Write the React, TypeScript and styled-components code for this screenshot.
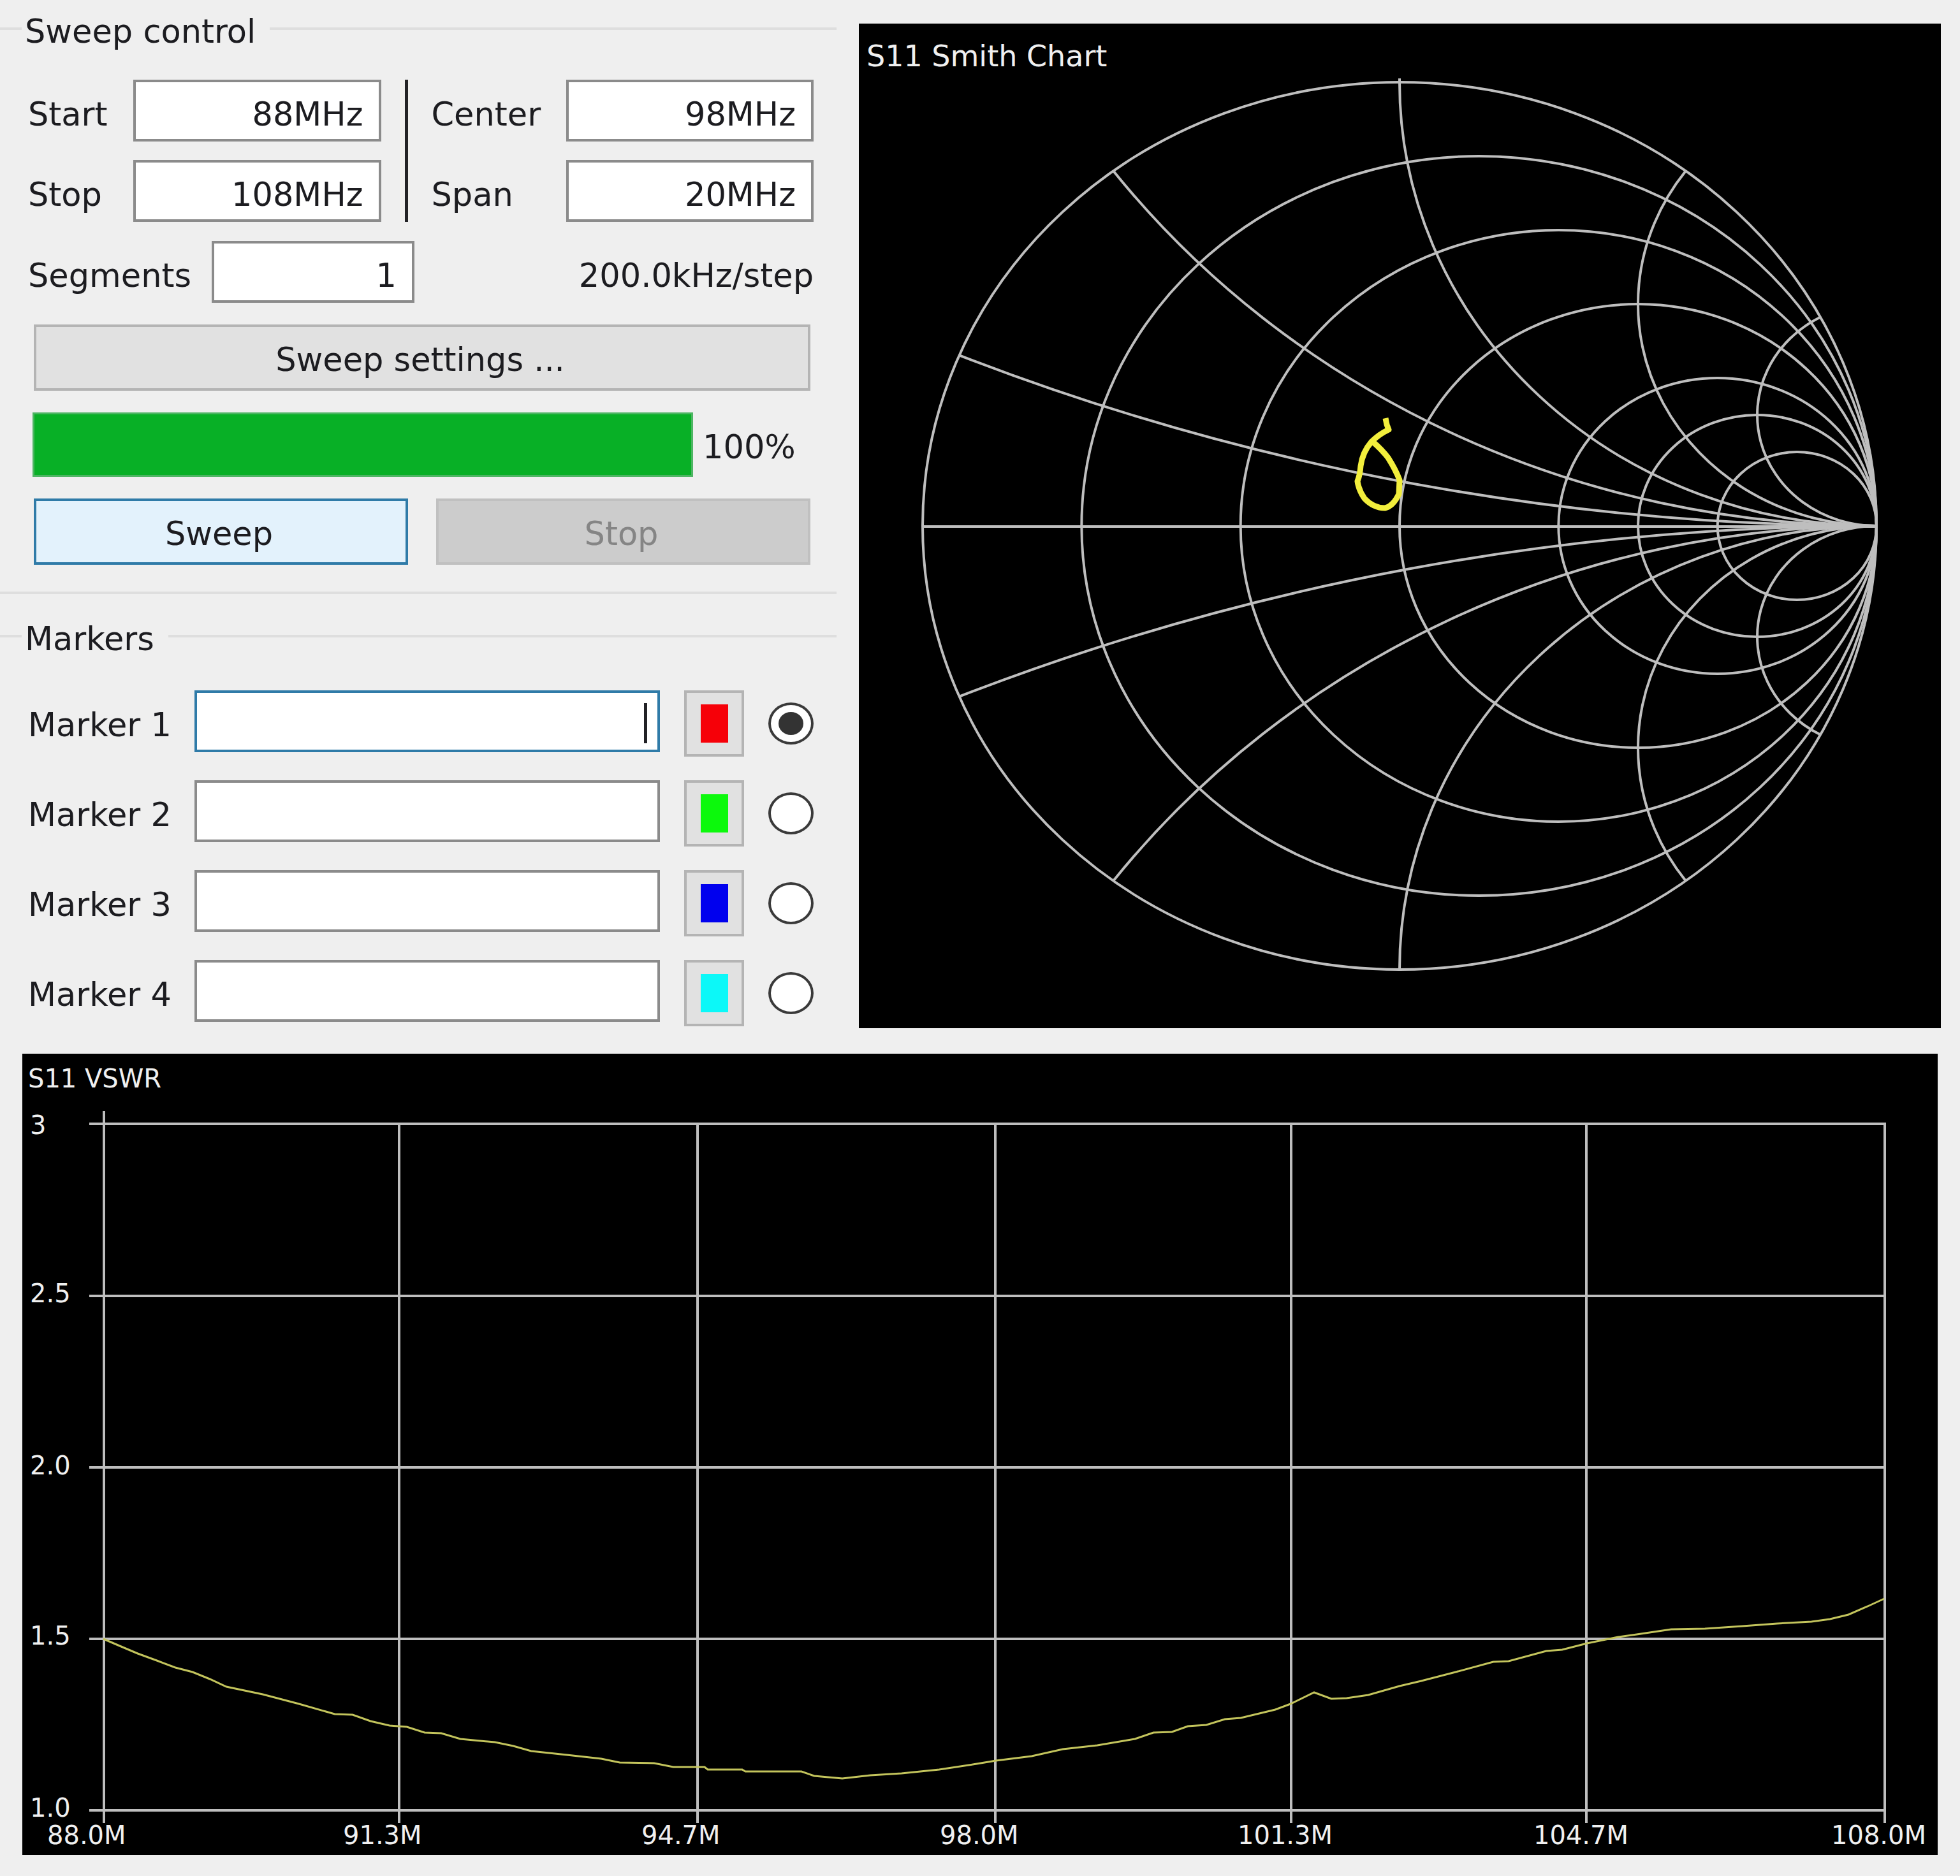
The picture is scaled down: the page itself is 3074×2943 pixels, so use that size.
import React, { useState } from "react";
import styled, { createGlobalStyle, css } from "styled-components";

const GlobalStyle = createGlobalStyle`
  *, *::before, *::after { box-sizing: border-box; }
  body {
    margin: 0;
    background: #efefef;
    color: #1c1c20;
    font-family: "DejaVu Sans", Verdana, sans-serif;
    font-size: 51px;
    line-height: 60px;
  }
  button, input { font: inherit; color: inherit; }
`;

const Page = styled.main`
  display: flex;
  flex-direction: column;
  gap: 40px;
  padding-bottom: 33px;
`;

const Upper = styled.div`
  display: grid;
  grid-template-columns: minmax(0, 1312fr) minmax(0, 1697fr);
  gap: 35px;
  padding-right: 30px;
`;

const ControlPanel = styled.form`
  display: flex;
  flex-direction: column;
  gap: 31px;
  padding-top: 10px;
`;

const Group = styled.fieldset<{ $last?: boolean }>`
  min-width: 0;
  margin: 0;
  border: 0 solid #dedede;
  border-top-width: 4px;
  border-bottom-width: ${(p) => (p.$last ? 0 : 4)}px;
  padding: ${(p) => (p.$last ? "50px 36px 0 44px" : "45px 36px 42px 44px")};
`;

const GroupTitle = styled.legend`
  margin-left: -10px;
  padding: 10px 22px 0 5px;
`;

const Stack = styled.div<{ $gap: number }>`
  display: flex;
  flex-direction: column;
  gap: ${(p) => p.$gap}px;
`;

const RangeGrid = styled.div`
  display: grid;
  grid-template-columns: 165px minmax(0, 1fr) 79px 211px minmax(0, 1fr);
  row-gap: 29px;
`;

const Divider = styled.div`
  grid-column: 3;
  grid-row: 1 / span 2;
  justify-self: center;
  width: 5px;
  background: #222226;
`;

const Label = styled.label<{ $width?: number }>`
  display: flex;
  align-items: center;
  height: 97px;
  padding-top: 12px;
  white-space: nowrap;
  ${(p) =>
    p.$width &&
    css`
      flex: 0 0 ${p.$width}px;
    `}
`;

const TextBox = styled.input<{ $width?: number; $active?: boolean }>`
  display: block;
  width: ${(p) => (p.$width ? `${p.$width}px` : "100%")};
  min-width: 0;
  height: 97px;
  margin: 0;
  padding: 12px 24px 0 8px;
  border: 4px solid ${(p) => (p.$active ? "#2f7ba8" : "#8b8b8b")};
  border-radius: 0;
  outline: none;
  background: #fff;
  text-align: right;
`;

const SegmentsRow = styled.div`
  display: flex;
`;

const StepSize = styled.output`
  display: flex;
  align-items: center;
  height: 97px;
  margin-left: auto;
  padding-top: 12px;
`;

const Actions = styled(Stack)`
  padding: 0 5px 0 9px;
`;

const ButtonRow = styled.div`
  display: grid;
  grid-template-columns: 1fr 1fr;
  gap: 44px;
`;

const PushButton = styled.button<{ $primary?: boolean }>`
  height: 104px;
  padding: 8px 6px 0 0;
  border: 4px solid ${(p) => (p.$primary ? "#2f7ba8" : "#b4b4b4")};
  border-radius: 0;
  background: ${(p) => (p.$primary ? "#e3f2fc" : "#e1e1e1")};
  &:disabled {
    border-color: #c0c0c0;
    background: #cccccc;
    color: #858585;
  }
`;

const ProgressRow = styled.div`
  display: flex;
  align-items: center;
  gap: 15px;
  margin-left: -2px;
`;

const Progress = styled.progress`
  appearance: none;
  flex: 1;
  min-width: 0;
  height: 101px;
  border: 3px solid #4cb562;
  &::-webkit-progress-bar {
    background: #e6e6e6;
  }
  &::-webkit-progress-value {
    background: #08b026;
  }
`;

const Percent = styled.span`
  flex: 0 0 169px;
  padding-top: 8px;
`;

const MarkerRow = styled.div`
  display: flex;
  align-items: flex-start;
  height: 104px;
`;

const MarkerField = styled.div`
  position: relative;
  flex: 1;
  min-width: 0;
`;

const Caret = styled.span`
  position: absolute;
  top: 20px;
  right: 20px;
  width: 5px;
  height: 63px;
  background: #222226;
`;

const ColorButton = styled.button`
  display: grid;
  place-items: center;
  width: 94px;
  height: 104px;
  margin-left: 38px;
  padding: 0;
  border: 4px solid #b4b4b4;
  background: #e1e1e1;
`;

const Swatch = styled.span<{ $color: string }>`
  width: 43px;
  height: 60px;
  background: ${(p) => p.$color};
`;

const Radio = styled.input`
  appearance: none;
  display: grid;
  place-items: center;
  align-self: center;
  width: 71px;
  height: 66px;
  margin: 0 0 0 38px;
  border: 4px solid #3a3a3a;
  border-radius: 50%;
  background: #fff;
  &:checked::before {
    content: "";
    width: 39px;
    height: 36px;
    border-radius: 50%;
    background: #333333;
  }
`;

const ChartFrame = styled.figure<{ $wide?: boolean }>`
  align-self: ${(p) => (p.$wide ? "stretch" : "start")};
  margin: ${(p) => (p.$wide ? "0 35px" : "37px 0 0")};
  background: #000;
`;

const Drawing = styled.svg`
  display: block;
  width: 100%;
  height: auto;
`;

const ChartText = styled.text<{ $size: number }>`
  fill: #f0f0f0;
  font-size: ${(p) => p.$size}px;
`;

const GRID = "#bebebe";

const SMITH = { cx: 848, cy: 788, rx: 748, ry: 696 };
const RESISTANCE = [1, 5 / 6, 4 / 6, 1 / 2, 1 / 3, 1 / 4, 1 / 6];
const REACTANCE = [0.2, 0.5, 1, 2, 4];

function reactanceArc(x: number, side: 1 | -1) {
  const { cx, cy, rx, ry } = SMITH;
  const u = (x * x - 1) / (x * x + 1);
  const v = (2 * x) / (x * x + 1);
  const sweep = side === 1 ? 0 : 1;
  return `M${cx + rx * u} ${cy - side * ry * v}A${rx / x} ${ry / x} 0 0 ${sweep} ${cx + rx} ${cy}`;
}

function SmithChart() {
  const { cx, cy, rx, ry } = SMITH;
  return (
    <ChartFrame>
      <Drawing viewBox="0 0 1697 1576" role="img" aria-label="S11 Smith Chart">
        <g fill="none" stroke={GRID} strokeWidth={4}>
          {RESISTANCE.map((k) => (
            <ellipse key={k} cx={cx + rx * (1 - k)} cy={cy} rx={rx * k} ry={ry * k} />
          ))}
          {REACTANCE.map((x) => (
            <React.Fragment key={x}>
              <path d={reactanceArc(x, 1)} />
              <path d={reactanceArc(x, -1)} />
            </React.Fragment>
          ))}
          <path d={`M${cx - rx} ${cy + 1}H${cx + rx}`} />
          <path d={`M${cx} ${cy - ry - 6}v8`} />
        </g>
        <path
          d="M826 619L828 629L831 637Q816 644 804 656Q790 672 787 694Q786 708 782 718Q784 732 793 745Q807 760 825 760Q838 757 847 738L848 716Q842 700 830 681Q820 668 806 656"
          fill="none"
          stroke="#f2ee3c"
          strokeWidth={9}
          strokeLinejoin="round"
        />
        <ChartText $size={46} x={12} y={67}>
          S11 Smith Chart
        </ChartText>
      </Drawing>
    </ChartFrame>
  );
}

const LEVELS = [
  { y: 110, label: "3", textY: 126 },
  { y: 380, label: "2.5", textY: 390 },
  { y: 649, label: "2.0", textY: 660 },
  { y: 918, label: "1.5", textY: 927 },
  { y: 1187, label: "1.0", textY: 1197 },
];

const FREQUENCIES = [
  { x: 128, label: "88.0M", textX: 39 },
  { x: 591, label: "91.3M", textX: 503 },
  { x: 1059, label: "94.7M", textX: 971 },
  { x: 1526, label: "98.0M", textX: 1439 },
  { x: 1990, label: "101.3M", textX: 1906 },
  { x: 2453, label: "104.7M", textX: 2370 },
  { x: 2921, label: "108.0M", textX: 2837 },
];

const VSWR_TRACE =
  "127,918 155,930 181,941 211,952 240,963 267,970 294,981 320,993 377,1005 434,1020 490,1036 518,1037 546,1047 576,1054 603,1056 631,1065 657,1066 687,1075 741,1080 770,1086 798,1094 854,1100 908,1106 937,1112 991,1113 1021,1119 1070,1119 1075,1123 1129,1123 1134,1126 1222,1126 1242,1133 1286,1137 1330,1132 1379,1129 1438,1123 1497,1114 1527,1109 1583,1102 1632,1091 1686,1085 1745,1075 1774,1065 1803,1064 1828,1055 1857,1053 1886,1044 1911,1042 1965,1029 1989,1020 2026,1002 2053,1012 2077,1011 2111,1006 2160,992 2194,984 2248,970 2307,954 2331,953 2390,937 2415,935 2454,925 2503,915 2532,911 2586,903 2639,902 2698,898 2752,894 2806,891 2835,887 2864,880 2894,867 2920,855";

function VswrChart() {
  return (
    <ChartFrame $wide>
      <Drawing viewBox="0 0 3004 1257" role="img" aria-label="S11 VSWR">
        <g stroke={GRID} strokeWidth={4}>
          {LEVELS.map((l) => (
            <line key={l.label} x1={105} x2={2923} y1={l.y} y2={l.y} />
          ))}
          {FREQUENCIES.map((f, i) => (
            <line key={f.label} x1={f.x} x2={f.x} y1={i === 0 ? 90 : 110} y2={1207} />
          ))}
        </g>
        <polyline points={VSWR_TRACE} fill="none" stroke="#c3c45c" strokeWidth={3} />
        <ChartText $size={40} x={9} y={53}>
          S11 VSWR
        </ChartText>
        {LEVELS.map((l) => (
          <ChartText key={l.label} $size={40} x={12} y={l.textY}>
            {l.label}
          </ChartText>
        ))}
        {FREQUENCIES.map((f) => (
          <ChartText key={f.label} $size={40} x={f.textX} y={1240}>
            {f.label}
          </ChartText>
        ))}
      </Drawing>
    </ChartFrame>
  );
}

const MARKERS = [
  { id: 1, color: "#f60008" },
  { id: 2, color: "#0cf90c" },
  { id: 3, color: "#0000ee" },
  { id: 4, color: "#0cf8f8" },
];

export default function App() {
  const [selected, setSelected] = useState(1);
  return (
    <>
      <GlobalStyle />
      <Page>
        <Upper>
          <ControlPanel onSubmit={(e) => e.preventDefault()}>
            <Group>
              <GroupTitle>Sweep control</GroupTitle>
              <Stack $gap={34}>
                <Stack $gap={30}>
                  <RangeGrid>
                    <Label htmlFor="start">Start</Label>
                    <TextBox id="start" defaultValue="88MHz" />
                    <Divider />
                    <Label htmlFor="center">Center</Label>
                    <TextBox id="center" defaultValue="98MHz" />
                    <Label htmlFor="stop">Stop</Label>
                    <TextBox id="stop" defaultValue="108MHz" />
                    <Label htmlFor="span">Span</Label>
                    <TextBox id="span" defaultValue="20MHz" />
                  </RangeGrid>
                  <SegmentsRow>
                    <Label htmlFor="segments" $width={288}>
                      Segments
                    </Label>
                    <TextBox id="segments" $width={318} defaultValue="1" />
                    <StepSize>200.0kHz/step</StepSize>
                  </SegmentsRow>
                </Stack>
                <Actions $gap={34}>
                  <PushButton type="button">Sweep settings ...</PushButton>
                  <ProgressRow>
                    <Progress value={100} max={100} aria-label="Sweep progress" />
                    <Percent>100%</Percent>
                  </ProgressRow>
                  <ButtonRow>
                    <PushButton type="submit" $primary>
                      Sweep
                    </PushButton>
                    <PushButton type="button" disabled>
                      Stop
                    </PushButton>
                  </ButtonRow>
                </Actions>
              </Stack>
            </Group>
            <Group $last>
              <GroupTitle>Markers</GroupTitle>
              <Stack $gap={37}>
                {MARKERS.map((m) => (
                  <MarkerRow key={m.id}>
                    <Label htmlFor={`marker-${m.id}`} $width={261}>
                      Marker {m.id}
                    </Label>
                    <MarkerField>
                      <TextBox id={`marker-${m.id}`} $active={m.id === selected} />
                      {m.id === selected && <Caret />}
                    </MarkerField>
                    <ColorButton type="button" aria-label={`Marker ${m.id} color`}>
                      <Swatch $color={m.color} />
                    </ColorButton>
                    <Radio
                      type="radio"
                      name="active-marker"
                      aria-label={`Select marker ${m.id}`}
                      checked={m.id === selected}
                      onChange={() => setSelected(m.id)}
                    />
                  </MarkerRow>
                ))}
              </Stack>
            </Group>
          </ControlPanel>
          <SmithChart />
        </Upper>
        <VswrChart />
      </Page>
    </>
  );
}
